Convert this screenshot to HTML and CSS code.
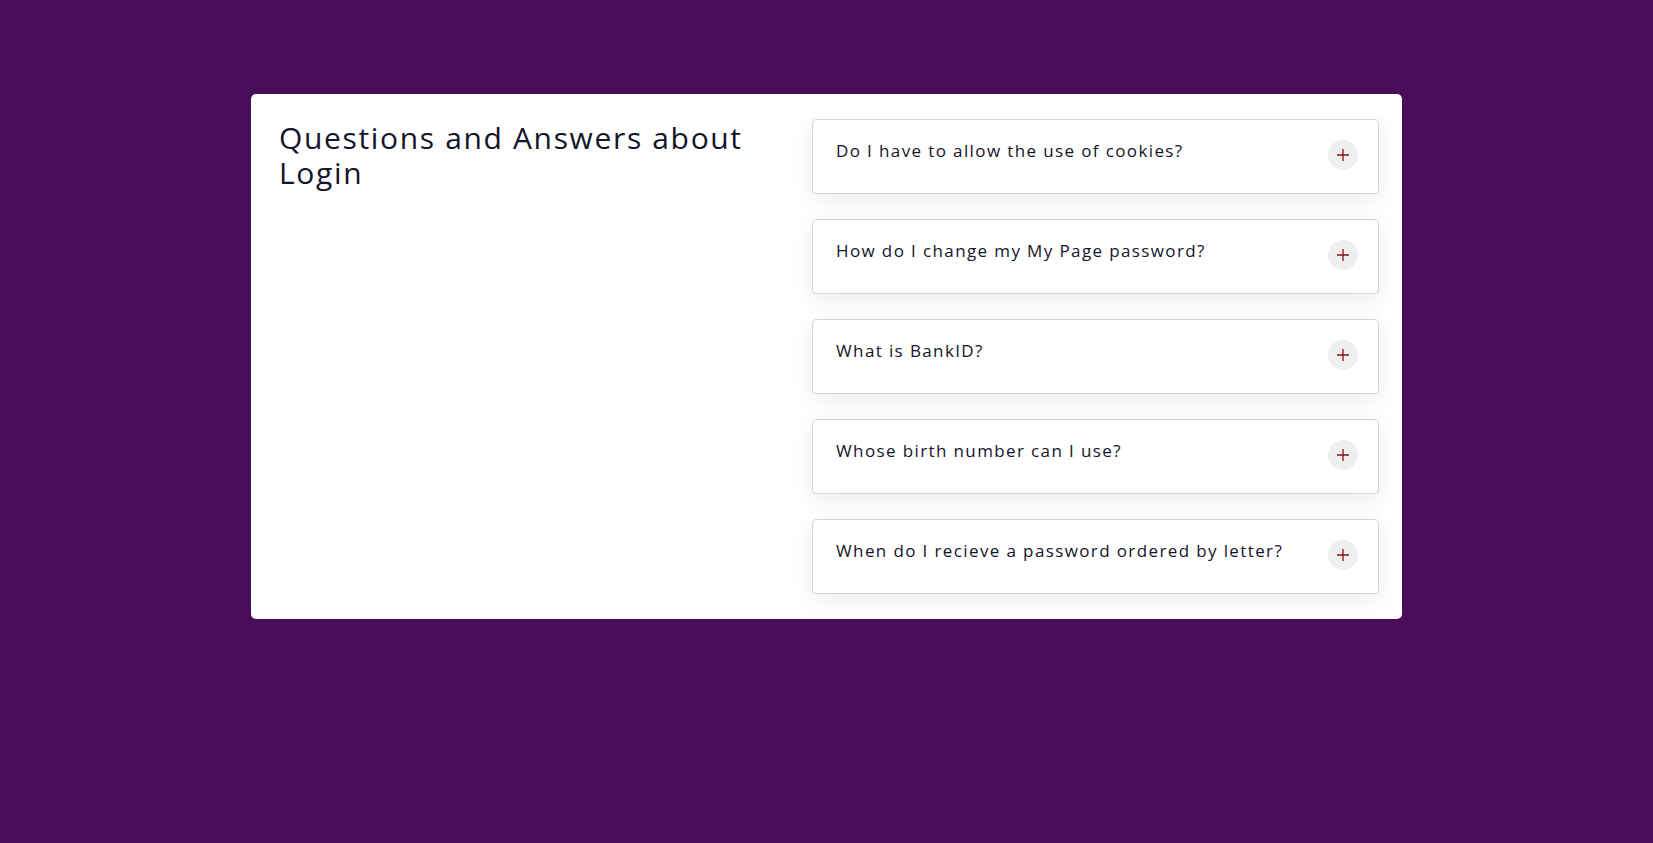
FILE: index.html
```html
<!DOCTYPE html>
<html lang="en">
<head>
<meta charset="utf-8">
<title>Questions and Answers about Login</title>
<link rel="stylesheet" href="styles.css">
</head>
<body>
<main class="page">
  <section class="card">
    <div class="intro">
      <h1 class="title">Questions and Answers about Login</h1>
    </div>
    <div class="faq">
      <div class="item"><span class="q">Do I have to allow the use of cookies?</span><span class="toggle"><svg viewBox="0 0 14 14" width="14" height="14"><path d="M7 1v12M1 7h12" stroke="#8b1010" stroke-width="1.3" fill="none"/></svg></span></div>
      <div class="item"><span class="q">How do I change my My Page password?</span><span class="toggle"><svg viewBox="0 0 14 14" width="14" height="14"><path d="M7 1v12M1 7h12" stroke="#8b1010" stroke-width="1.3" fill="none"/></svg></span></div>
      <div class="item"><span class="q">What is BankID?</span><span class="toggle"><svg viewBox="0 0 14 14" width="14" height="14"><path d="M7 1v12M1 7h12" stroke="#8b1010" stroke-width="1.3" fill="none"/></svg></span></div>
      <div class="item"><span class="q">Whose birth number can I use?</span><span class="toggle"><svg viewBox="0 0 14 14" width="14" height="14"><path d="M7 1v12M1 7h12" stroke="#8b1010" stroke-width="1.3" fill="none"/></svg></span></div>
      <div class="item"><span class="q">When do I recieve a password ordered by letter?</span><span class="toggle"><svg viewBox="0 0 14 14" width="14" height="14"><path d="M7 1v12M1 7h12" stroke="#8b1010" stroke-width="1.3" fill="none"/></svg></span></div>
    </div>
  </section>
</main>
</body>
</html>
```

FILE: styles.css
```css
html, body {
  margin: 0;
  padding: 0;
}
body {
  background: #4a0d5a;
  font-family: "Open Sans", Lato, sans-serif;
  color: #14142a;
  min-height: 843px;
}
.page {
  padding-top: 94px;
  display: flex;
  justify-content: center;
}
.card {
  width: 1151px;
  height: 525px;
  box-sizing: border-box;
  background: #fff;
  border-radius: 5px;
  display: flex;
  padding: 25px 23px 25px 28px;
}
.intro {
  flex: 1;
}
.title {
  margin: 0;
  padding-top: 1px;
  width: 500px;
  font-size: 30px;
  font-weight: 400;
  line-height: 35px;
  letter-spacing: 1.65px;
}
.faq {
  width: 567px;
  display: flex;
  flex-direction: column;
  gap: 25.5px;
}
.item {
  height: 75px;
  box-sizing: border-box;
  border: 1px solid #d6d6d6;
  border-radius: 4px;
  background: #fff;
  box-shadow: 0 6px 22px rgba(0, 0, 0, 0.08);
  display: flex;
  justify-content: space-between;
  align-items: flex-start;
  padding: 19px 20px 0 23px;
}
.q {
  font-size: 17px;
  line-height: 22px;
  letter-spacing: 1.38px;
  padding-top: 1px;
}
.toggle {
  width: 30px;
  height: 30px;
  margin-top: 1px;
  border-radius: 50%;
  background: #efefef;
  display: flex;
  align-items: center;
  justify-content: center;
}
```
